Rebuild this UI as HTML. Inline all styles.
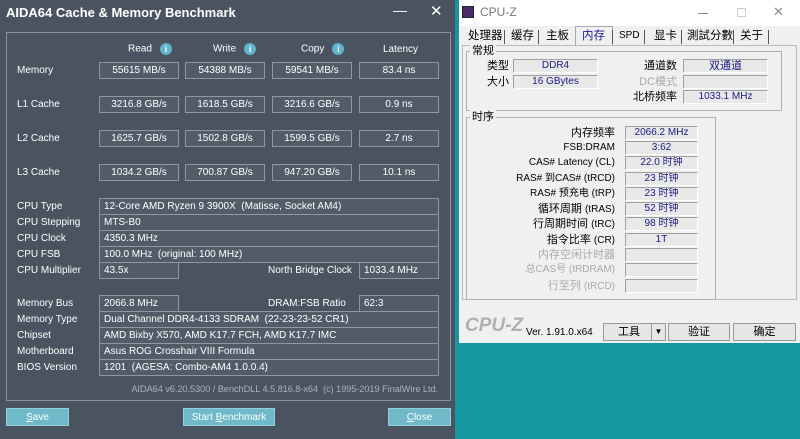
<!DOCTYPE html><html><head><meta charset="utf-8"><style>
*{margin:0;padding:0;box-sizing:border-box}
body{width:800px;height:439px;overflow:hidden;position:relative;background:#1596a0;font-family:"Liberation Sans","Noto Sans CJK SC",sans-serif}
.a{position:absolute;left:0;top:0;width:455px;height:439px;background:#4a5460}
.t{position:absolute;color:#fff;font-size:10px;white-space:nowrap}
.bx{position:absolute;border:1px solid #8f98a2;background:#525c68;color:#fff;font-size:10px;line-height:15px;height:17px;white-space:nowrap}
.c{text-align:center}
.l{padding-left:4px}
.btn{position:absolute;background:#6fb9c8;color:#fff;font-size:10px;text-align:center;line-height:18px;height:18px;border:1px solid #8fd0dc}
.i{display:inline-block;width:12px;height:12px;border-radius:6px;background:#5fb3cc;color:#fff;font-size:9px;font-weight:bold;text-align:center;line-height:12px;font-family:"Liberation Serif",serif;vertical-align:middle;margin-left:8px}
.cz{position:absolute;left:459px;top:0;width:341px;height:343px;background:#f0f0f0}
.ct{position:absolute;font-size:11px;line-height:14px;height:14px;color:#000;white-space:nowrap}
.cv{position:absolute;background:#e8e8e8;border-top:1px solid #a0a0a0;border-left:1px solid #a0a0a0;border-right:1px solid #fff;border-bottom:1px solid #fff;color:#1a1a80;font-size:10px;text-align:center;line-height:12px;height:14px;overflow:hidden}
.g{position:absolute;border:1px solid #b0b0b0}
.gl{position:absolute;background:#f0f0f0;font-size:11px;line-height:14px;padding:0 2px}
.r{text-align:right}
.cb{position:absolute;background:#e6e6e6;border:1px solid #999;font-size:11px;text-align:center;line-height:16px;height:18px}
.tab{position:absolute;top:29px;font-size:11.5px;line-height:14px;white-space:nowrap}
.sep{position:absolute;top:30px;width:1px;height:14px;background:#555}
</style></head><body>
<div class="a">
<div class="t" style="left:6px;top:5px;font-size:13px;font-weight:bold">AIDA64 Cache &amp; Memory Benchmark</div>
<div class="t" style="left:393px;top:2px;font-size:14px">—</div>
<div class="t" style="left:430px;top:2px;font-size:15px">✕</div>
<div style="position:absolute;left:6px;top:32px;width:445px;height:369px;border:1px solid #8a939d"></div>
<div class="t" style="left:128px;top:43px">Read<span class="i">i</span></div>
<div class="t" style="left:213px;top:43px">Write<span class="i">i</span></div>
<div class="t" style="left:301px;top:43px">Copy<span class="i">i</span></div>
<div class="t" style="left:383px;top:44px">Latency</div>

<div class="t" style="left:17px;top:65px">Memory</div>
<div class="bx c" style="left:99px;top:62px;width:80px">55615 MB/s</div>
<div class="bx c" style="left:185px;top:62px;width:80px">54388 MB/s</div>
<div class="bx c" style="left:272px;top:62px;width:80px">59541 MB/s</div>
<div class="bx c" style="left:359px;top:62px;width:80px">83.4 ns</div>
<div class="t" style="left:17px;top:99px">L1 Cache</div>
<div class="bx c" style="left:99px;top:96px;width:80px">3216.8 GB/s</div>
<div class="bx c" style="left:185px;top:96px;width:80px">1618.5 GB/s</div>
<div class="bx c" style="left:272px;top:96px;width:80px">3216.6 GB/s</div>
<div class="bx c" style="left:359px;top:96px;width:80px">0.9 ns</div>
<div class="t" style="left:17px;top:133px">L2 Cache</div>
<div class="bx c" style="left:99px;top:130px;width:80px">1625.7 GB/s</div>
<div class="bx c" style="left:185px;top:130px;width:80px">1502.8 GB/s</div>
<div class="bx c" style="left:272px;top:130px;width:80px">1599.5 GB/s</div>
<div class="bx c" style="left:359px;top:130px;width:80px">2.7 ns</div>
<div class="t" style="left:17px;top:167px">L3 Cache</div>
<div class="bx c" style="left:99px;top:164px;width:80px">1034.2 GB/s</div>
<div class="bx c" style="left:185px;top:164px;width:80px">700.87 GB/s</div>
<div class="bx c" style="left:272px;top:164px;width:80px">947.20 GB/s</div>
<div class="bx c" style="left:359px;top:164px;width:80px">10.1 ns</div>

<div class="t" style="left:17px;top:201px">CPU Type</div>
<div class="bx l" style="left:99px;top:198px;width:340px">12-Core AMD Ryzen 9 3900X&nbsp; (Matisse, Socket AM4)</div>
<div class="t" style="left:17px;top:217px">CPU Stepping</div>
<div class="bx l" style="left:99px;top:214px;width:340px">MTS-B0</div>
<div class="t" style="left:17px;top:233px">CPU Clock</div>
<div class="bx l" style="left:99px;top:230px;width:340px">4350.3 MHz</div>
<div class="t" style="left:17px;top:249px">CPU FSB</div>
<div class="bx l" style="left:99px;top:246px;width:340px">100.0 MHz&nbsp; (original: 100 MHz)</div>
<div class="t" style="left:17px;top:265px">CPU Multiplier</div>
<div class="bx l" style="left:99px;top:262px;width:80px">43.5x</div>
<div class="t" style="left:268px;top:265px">North Bridge Clock</div>
<div class="bx l" style="left:359px;top:262px;width:80px">1033.4 MHz</div>

<div class="t" style="left:17px;top:298px">Memory Bus</div>
<div class="bx l" style="left:99px;top:295px;width:80px">2066.8 MHz</div>
<div class="t" style="left:268px;top:298px">DRAM:FSB Ratio</div>
<div class="bx l" style="left:359px;top:295px;width:80px">62:3</div>
<div class="t" style="left:17px;top:314px">Memory Type</div>
<div class="bx l" style="left:99px;top:311px;width:340px">Dual Channel DDR4-4133 SDRAM&nbsp; (22-23-23-52 CR1)</div>
<div class="t" style="left:17px;top:330px">Chipset</div>
<div class="bx l" style="left:99px;top:327px;width:340px">AMD Bixby X570, AMD K17.7 FCH, AMD K17.7 IMC</div>
<div class="t" style="left:17px;top:346px">Motherboard</div>
<div class="bx l" style="left:99px;top:343px;width:340px">Asus ROG Crosshair VIII Formula</div>
<div class="t" style="left:17px;top:362px">BIOS Version</div>
<div class="bx l" style="left:99px;top:359px;width:340px">1201&nbsp; (AGESA: Combo-AM4 1.0.0.4)</div>
<div class="t" style="right:17px;top:384px;color:#aab2bb;font-size:9.3px;letter-spacing:-0.1px">AIDA64 v6.20.5300 / BenchDLL 4.5.816.8-x64&nbsp; (c) 1995-2019 FinalWire Ltd.</div>
<div class="btn" style="left:6px;top:408px;width:63px"><u>S</u>ave</div>
<div class="btn" style="left:183px;top:408px;width:92px">Start <u>B</u>enchmark</div>
<div class="btn" style="left:388px;top:408px;width:63px"><u>C</u>lose</div>
</div>

<div class="cz">
<div style="position:absolute;left:0;top:0;width:341px;height:26px;background:#fff"></div>
<div style="position:absolute;left:3px;top:6px;width:12px;height:12px;background:#4a2a6a;border:1px solid #222"></div>
<div class="ct" style="left:21px;top:5px;font-size:12px;color:#777">CPU-Z</div>
<div style="position:absolute;left:239px;top:13px;width:10px;height:1px;background:#888"></div>
<div style="position:absolute;left:278px;top:8px;width:9px;height:9px;border:1px solid #ccc"></div>
<div class="ct" style="left:314px;top:5px;font-size:13px;color:#888">✕</div>
<div style="position:absolute;left:116px;top:26px;width:38px;height:20px;background:#f0f0f0;border:1px solid #aaa;border-bottom:none"></div>
<div class="tab" style="left:9px">处理器</div><div class="sep" style="left:45px"></div>
<div class="tab" style="left:52px">缓存</div><div class="sep" style="left:79px"></div>
<div class="tab" style="left:87px">主板</div>
<div class="tab" style="left:123px;color:#1a1a9a">内存</div><div class="sep" style="left:153px"></div>
<div class="tab" style="left:160px;font-size:10px">SPD</div><div class="sep" style="left:185px"></div>
<div class="tab" style="left:195px">显卡</div><div class="sep" style="left:222px"></div>
<div class="tab" style="left:228px">測試分數</div><div class="sep" style="left:274px"></div>
<div class="tab" style="left:281px">关于</div><div class="sep" style="left:309px"></div>
<div style="position:absolute;left:3px;top:45px;width:335px;height:255px;border:1px solid #bbb"></div>

<div class="g" style="left:7px;top:51px;width:316px;height:60px"></div>
<div class="gl" style="left:11px;top:44px">常规</div>
<div class="ct r" style="left:10px;top:59px;width:40px">类型</div>
<div class="cv" style="left:54px;top:59px;width:85px">DDR4</div>
<div class="ct r" style="left:10px;top:75px;width:40px">大小</div>
<div class="cv" style="left:54px;top:75px;width:85px">16 GBytes</div>
<div class="ct r" style="left:150px;top:59px;width:68px">通道数</div>
<div class="cv" style="left:224px;top:59px;width:85px;font-size:11px">双通道</div>
<div class="ct r" style="left:150px;top:75px;width:68px;color:#aaa">DC模式</div>
<div class="cv" style="left:224px;top:75px;width:85px"></div>
<div class="ct r" style="left:150px;top:90px;width:68px">北桥频率</div>
<div class="cv" style="left:224px;top:90px;width:85px">1033.1 MHz</div>

<div class="g" style="left:7px;top:117px;width:250px;height:183px"></div>
<div class="gl" style="left:11px;top:110px">时序</div>
<div class="ct r" style="left:20px;top:126px;width:136px">内存频率</div><div class="cv" style="left:166px;top:126px;width:73px">2066.2 MHz</div>
<div class="ct r" style="left:20px;top:141px;width:136px;font-size:10px">FSB:DRAM</div><div class="cv" style="left:166px;top:141px;width:73px">3:62</div>
<div class="ct r" style="left:20px;top:156px;width:136px;font-size:10px">CAS# Latency (CL)</div><div class="cv" style="left:166px;top:156px;width:73px">22.0 时钟</div>
<div class="ct r" style="left:20px;top:172px;width:136px;font-size:10px">RAS# 到CAS# (tRCD)</div><div class="cv" style="left:166px;top:172px;width:73px">23 时钟</div>
<div class="ct r" style="left:20px;top:187px;width:136px;font-size:10px">RAS# 预充电 (tRP)</div><div class="cv" style="left:166px;top:187px;width:73px">23 时钟</div>
<div class="ct r" style="left:20px;top:202px;width:136px">循环周期 <span style="font-size:10px">(tRAS)</span></div><div class="cv" style="left:166px;top:202px;width:73px">52 时钟</div>
<div class="ct r" style="left:20px;top:217px;width:136px">行周期时间 <span style="font-size:10px">(tRC)</span></div><div class="cv" style="left:166px;top:217px;width:73px">98 时钟</div>
<div class="ct r" style="left:20px;top:233px;width:136px">指令比率 <span style="font-size:10px">(CR)</span></div><div class="cv" style="left:166px;top:233px;width:73px">1T</div>
<div class="ct r" style="left:20px;top:248px;width:136px;color:#aaa">内存空闲计时器</div><div class="cv" style="left:166px;top:248px;width:73px"></div>
<div class="ct r" style="left:20px;top:263px;width:136px;color:#aaa;font-size:10px">总CAS号 (tRDRAM)</div><div class="cv" style="left:166px;top:263px;width:73px"></div>
<div class="ct r" style="left:20px;top:279px;width:136px;color:#aaa">行至列 <span style="font-size:10px">(tRCD)</span></div><div class="cv" style="left:166px;top:279px;width:73px"></div>

<div class="ct" style="left:6px;top:314px;height:24px;line-height:24px;font-size:19px;font-style:italic;font-weight:bold;color:#b0b0b0">CPU-Z</div>
<div class="ct" style="left:67px;top:326px;font-size:10px">Ver. 1.91.0.x64</div>
<div class="cb" style="left:144px;top:323px;width:63px;text-align:left;padding-left:14px">工具</div>
<div class="cb" style="left:192px;top:323px;width:15px;font-size:8px">▼</div>
<div class="cb" style="left:209px;top:323px;width:62px">验证</div>
<div class="cb" style="left:274px;top:323px;width:63px">确定</div>
</div>
</body></html>
